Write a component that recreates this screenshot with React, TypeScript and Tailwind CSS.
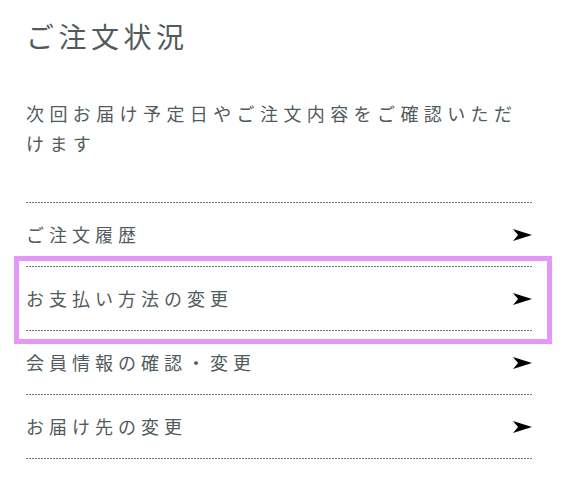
const items = ["ご注文履歴", "お支払い方法の変更", "会員情報の確認・変更", "お届け先の変更"];

const Arrow = () => (
  <svg width="19" height="12" viewBox="0 0 19 12" className="shrink-0">
    <path d="M0 0 L19 6 L0 12 L5 6 Z" fill="#000" />
  </svg>
);

const Dots = () => (
  <div className="h-px w-full bg-[repeating-linear-gradient(90deg,#6f787a_0px,#6f787a_2px,transparent_2px,transparent_3px)]" />
);

export default function App() {
  return (
    <div
      className="h-[502px] w-[580px] bg-white pl-[26px] pr-[48px] pt-[16px] text-[#515b5d]"
      style={{ fontFamily: '"Noto Sans CJK JP", "Noto Sans", sans-serif' }}
    >
      <h1 className="text-[28px] leading-[40px] tracking-[4.5px]">ご注文状況</h1>
      <p className="mt-[42px] text-[18px] leading-[30px] tracking-[5.4px]">
        次回お届け予定日やご注文内容をご確認いただけます
      </p>
      <ul className="mt-[44px]">
        {items.map((label, i) => (
          <li key={label} className="relative">
            <Dots />
            <div className="flex h-[63px] items-center justify-between">
              <span className="text-[18px] tracking-[5px]">{label}</span>
              <Arrow />
            </div>
            {i === 1 && (
              <div className="pointer-events-none absolute -top-[10px] -right-[20px] -bottom-[14px] -left-[12px] border-[5px] border-[#e597f7]" />
            )}
          </li>
        ))}
        <Dots />
      </ul>
    </div>
  );
}
